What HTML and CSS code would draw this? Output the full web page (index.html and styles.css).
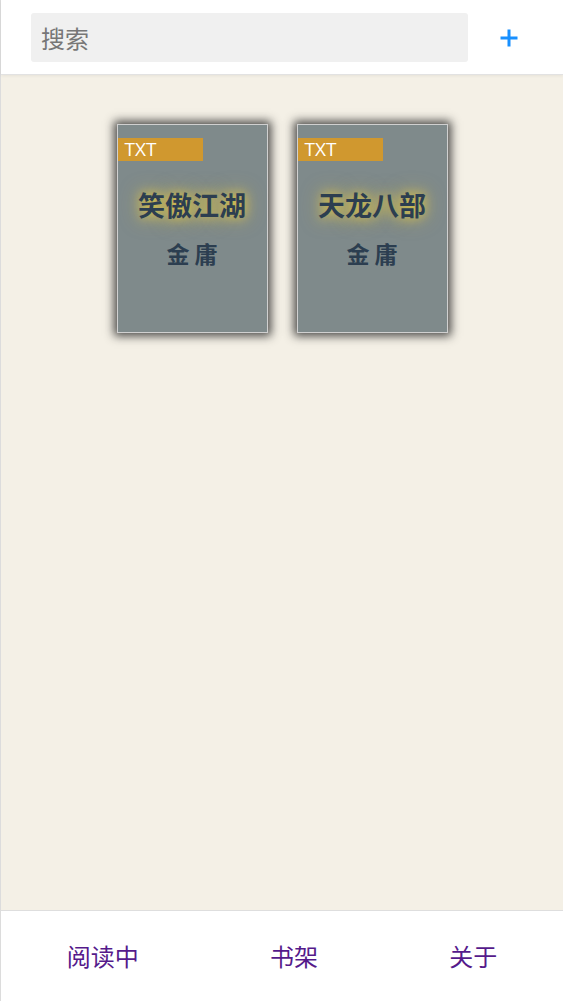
FILE: index.html
```html
<!DOCTYPE html>
<html lang="zh">
<head>
<meta charset="utf-8">
<link rel="stylesheet" href="styles.css">
</head>
<body>
<div class="app">
  <header class="topbar">
    <div class="search"><span class="placeholder">搜索</span></div>
    <div class="add">
      <svg width="20" height="20" viewBox="0 0 20 20"><path d="M10 1.5V18.5M1.5 10H18.5" stroke="#1890ff" stroke-width="3" fill="none"/></svg>
    </div>
  </header>
  <main class="shelf">
    <div class="book">
      <div class="tag">TXT</div>
      <div class="title">笑傲江湖</div>
      <div class="author">金庸</div>
    </div>
    <div class="book">
      <div class="tag">TXT</div>
      <div class="title">天龙八部</div>
      <div class="author">金庸</div>
    </div>
  </main>
  <footer class="tabs">
    <a class="tab">阅读中</a>
    <a class="tab">书架</a>
    <a class="tab">关于</a>
  </footer>
</div>
</body>
</html>
```

FILE: styles.css
```css
html, body {
  margin: 0;
  padding: 0;
  height: 100%;
}
body {
  font-family: "Noto Sans CJK SC", "Noto Sans", sans-serif;
  background: #fff;
}
.app {
  height: 1001px;
  display: flex;
  flex-direction: column;
  border-left: 1px solid #dcdcdc;
  box-sizing: border-box;
}
.topbar {
  height: 75px;
  flex: none;
  display: flex;
  align-items: flex-start;
  padding: 13px 0 0 30px;
  box-sizing: border-box;
  background: #fff;
  border-bottom: 1px solid #e2e2e2;
  box-shadow: 0 1px 3px rgba(0,0,0,0.06);
  position: relative;
  z-index: 1;
}
.search {
  width: 437px;
  height: 49px;
  background: #f0f0f0;
  border-radius: 3px;
  display: flex;
  align-items: center;
  padding-left: 10px;
  box-sizing: border-box;
}
.placeholder {
  font-size: 24px;
  color: #777;
  line-height: 1;
}
.add {
  margin-left: 31px;
  margin-top: 15px;
  width: 20px;
  height: 20px;
}
.add svg { display: block; }
.shelf {
  flex: 1;
  background: #f4f0e6;
  display: flex;
  justify-content: center;
  align-items: flex-start;
  gap: 29px;
  padding-top: 49px;
}
.book {
  width: 151px;
  height: 209px;
  box-sizing: border-box;
  background: #7f8a8b;
  border: 1px solid #d0d0d0;
  box-shadow: 0 0 9px 3px rgba(30,30,30,0.8);
  display: flex;
  flex-direction: column;
  align-items: center;
  padding-top: 13px;
}
.tag {
  align-self: flex-start;
  width: 85px;
  height: 23px;
  box-sizing: border-box;
  background: #d0982f;
  color: #fff;
  font-family: "Open Sans", "Noto Sans", sans-serif;
  font-size: 19px;
  line-height: 23px;
  padding-left: 7px;
}
.title {
  margin-top: 26px;
  font-size: 27px;
  font-weight: bold;
  color: #2c3e50;
  line-height: 36px;
  text-shadow: 0 0 12px rgba(235,205,60,0.95), 0 0 20px rgba(235,205,60,0.5);
}
.author {
  margin-top: 14px;
  font-size: 23px;
  font-weight: bold;
  color: #2c3e50;
  line-height: 32px;
  letter-spacing: 5px;
  padding-left: 5px;
}
.tabs {
  height: 91px;
  flex: none;
  background: #fff;
  border-top: 1px solid #dedede;
  box-sizing: border-box;
  display: flex;
  justify-content: space-around;
  align-items: center;
}
.tab {
  font-size: 24px;
  color: #551a8b;
  line-height: 1;
}
```
